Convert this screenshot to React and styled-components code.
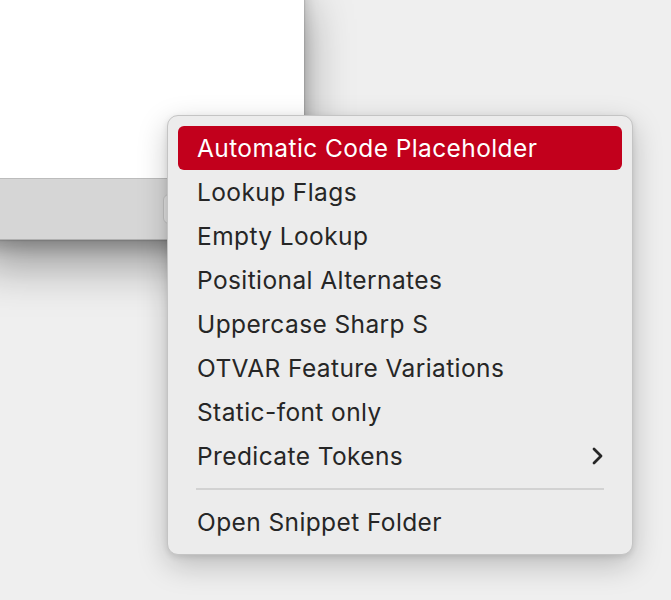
import React from 'react';
import styled, { createGlobalStyle } from 'styled-components';

const GlobalStyle = createGlobalStyle`
  html, body {
    margin: 0;
    padding: 0;
    background: #efefef;
    overflow: hidden;
  }
  body {
    font-family: "Inter", "Noto Sans", sans-serif;
  }
`;

const Desktop = styled.div`
  position: relative;
  width: 671px;
  height: 600px;
  background: #efefef;
  overflow: hidden;
`;

const Window = styled.div`
  position: absolute;
  left: -20px;
  top: -20px;
  width: 324px;
  height: 260px;
  display: flex;
  flex-direction: column;
  box-shadow: 0 24px 44px rgba(0, 0, 0, 0.38), 0 8px 14px rgba(0, 0, 0, 0.18), 0 0 2px rgba(0, 0, 0, 0.3);
`;

const Content = styled.div`
  flex: 1;
  background: #ffffff;
`;

const Toolbar = styled.div`
  height: 60px;
  background: #d6d6d6;
  border-top: 1px solid #bcbcbc;
  border-bottom: 1px solid #b0b0b0;
  display: flex;
  align-items: center;
  padding-left: 183px;
`;

const ToolButton = styled.div`
  width: 70px;
  height: 30px;
  box-sizing: border-box;
  border: 1px solid #c2c2c2;
  border-radius: 6px;
  background: #e4e4e4;
`;

const Menu = styled.div`
  position: absolute;
  left: 167px;
  top: 115px;
  width: 466px;
  box-sizing: border-box;
  padding: 10px;
  background: #ececec;
  border: 1px solid #c4c4c4;
  border-radius: 11px;
  box-shadow: 0 10px 30px rgba(0, 0, 0, 0.22), 0 2px 6px rgba(0, 0, 0, 0.1);
  display: flex;
  flex-direction: column;
`;

const Item = styled.div`
  height: 44px;
  display: flex;
  align-items: center;
  justify-content: space-between;
  padding: 0 18px 0 19px;
  border-radius: 6px;
  font-size: 24.5px;
  letter-spacing: 0.4px;
  color: ${p => (p.$active ? '#ffffff' : '#262626')};
  background: ${p => (p.$active ? '#c2001c' : 'transparent')};
`;

const Separator = styled.div`
  height: 2px;
  background: #d2d2d2;
  margin: 10px 18px;
`;

const Chevron = () => (
  <svg width="14" height="20" viewBox="0 0 14 20">
    <path d="M4 3 L11 10 L4 17" fill="none" stroke="#262626" strokeWidth="2.8" strokeLinecap="round" strokeLinejoin="round" />
  </svg>
);

const items = [
  'Automatic Code Placeholder',
  'Lookup Flags',
  'Empty Lookup',
  'Positional Alternates',
  'Uppercase Sharp S',
  'OTVAR Feature Variations',
  'Static-font only',
];

export default function App() {
  return (
    <Desktop>
      <GlobalStyle />
      <Window>
        <Content />
        <Toolbar>
          <ToolButton />
        </Toolbar>
      </Window>
      <Menu>
        {items.map((label, i) => (
          <Item key={label} $active={i === 0}>{label}</Item>
        ))}
        <Item>
          Predicate Tokens
          <Chevron />
        </Item>
        <Separator />
        <Item>Open Snippet Folder</Item>
      </Menu>
    </Desktop>
  );
}
